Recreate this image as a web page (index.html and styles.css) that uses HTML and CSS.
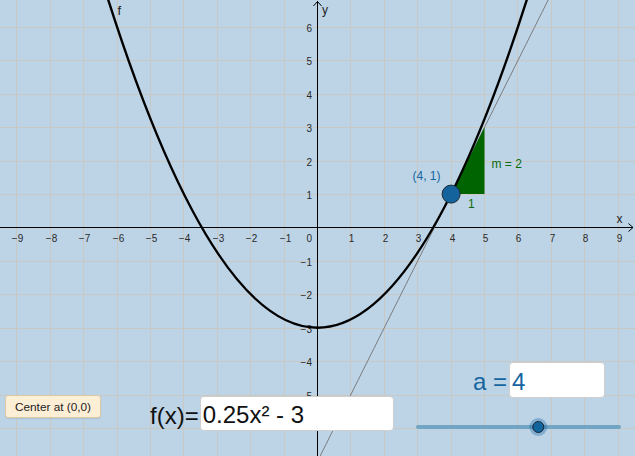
FILE: index.html
```html
<!DOCTYPE html>
<html>
<head>
<meta charset="utf-8">
<link rel="stylesheet" href="styles.css">
</head>
<body>
<div class="stage">
  <svg class="graph" width="635" height="456" viewBox="0 0 635 456" xmlns="http://www.w3.org/2000/svg">
    <rect width="635" height="456" fill="#bdd4e7"/>
    <g class="grid" stroke="#cac8c4" stroke-width="1">
      <line x1="16.5" y1="0" x2="16.5" y2="456"/>
      <line x1="50.5" y1="0" x2="50.5" y2="456"/>
      <line x1="83.5" y1="0" x2="83.5" y2="456"/>
      <line x1="117.5" y1="0" x2="117.5" y2="456"/>
      <line x1="150.5" y1="0" x2="150.5" y2="456"/>
      <line x1="183.5" y1="0" x2="183.5" y2="456"/>
      <line x1="217.5" y1="0" x2="217.5" y2="456"/>
      <line x1="250.5" y1="0" x2="250.5" y2="456"/>
      <line x1="284.5" y1="0" x2="284.5" y2="456"/>
      <line x1="350.5" y1="0" x2="350.5" y2="456"/>
      <line x1="384.5" y1="0" x2="384.5" y2="456"/>
      <line x1="417.5" y1="0" x2="417.5" y2="456"/>
      <line x1="451.5" y1="0" x2="451.5" y2="456"/>
      <line x1="484.5" y1="0" x2="484.5" y2="456"/>
      <line x1="517.5" y1="0" x2="517.5" y2="456"/>
      <line x1="551.5" y1="0" x2="551.5" y2="456"/>
      <line x1="584.5" y1="0" x2="584.5" y2="456"/>
      <line x1="618.5" y1="0" x2="618.5" y2="456"/>
      <line x1="0" y1="27.5" x2="635" y2="27.5"/>
      <line x1="0" y1="60.5" x2="635" y2="60.5"/>
      <line x1="0" y1="94.5" x2="635" y2="94.5"/>
      <line x1="0" y1="127.5" x2="635" y2="127.5"/>
      <line x1="0" y1="161.5" x2="635" y2="161.5"/>
      <line x1="0" y1="194.5" x2="635" y2="194.5"/>
      <line x1="0" y1="261.5" x2="635" y2="261.5"/>
      <line x1="0" y1="294.5" x2="635" y2="294.5"/>
      <line x1="0" y1="328.5" x2="635" y2="328.5"/>
      <line x1="0" y1="361.5" x2="635" y2="361.5"/>
      <line x1="0" y1="395.5" x2="635" y2="395.5"/>
      <line x1="0" y1="428.5" x2="635" y2="428.5"/>
    </g>
    <g class="axes" stroke="#000" stroke-width="1" fill="none">
      <line x1="0" y1="227.5" x2="633" y2="227.5"/>
      <line x1="317.5" y1="1" x2="317.5" y2="456"/>
      <polyline points="313.5,6 317.5,1.5 321.5,6"/>
      <polyline points="628.5,223.5 633,227.5 628.5,231.5"/>
    </g>
    <g class="ticks" font-family="'Liberation Sans', Arial, sans-serif" font-size="10" fill="#2a2a2a" text-anchor="middle">
      <text x="17.5" y="241.5">−9</text>
      <text x="51.5" y="241.5">−8</text>
      <text x="84.5" y="241.5">−7</text>
      <text x="118.5" y="241.5">−6</text>
      <text x="151.5" y="241.5">−5</text>
      <text x="184.5" y="241.5">−4</text>
      <text x="218.5" y="241.5">−3</text>
      <text x="251.5" y="241.5">−2</text>
      <text x="285.5" y="241.5">−1</text>
      <text x="351.5" y="241.5">1</text>
      <text x="385.5" y="241.5">2</text>
      <text x="418.5" y="241.5">3</text>
      <text x="452.5" y="241.5">4</text>
      <text x="485.5" y="241.5">5</text>
      <text x="518.5" y="241.5">6</text>
      <text x="552.5" y="241.5">7</text>
      <text x="585.5" y="241.5">8</text>
      <text x="619.5" y="241.5">9</text>
    </g>
    <g class="ticks" font-family="'Liberation Sans', Arial, sans-serif" font-size="10" fill="#2a2a2a" text-anchor="end">
      <text x="312" y="241.5">0</text>
      <text x="312" y="31.5">6</text>
      <text x="312" y="64.5">5</text>
      <text x="312" y="98.5">4</text>
      <text x="312" y="131.5">3</text>
      <text x="312" y="165.5">2</text>
      <text x="312" y="198.5">1</text>
      <text x="312" y="265.5">−1</text>
      <text x="312" y="298.5">−2</text>
      <text x="312" y="332.5">−3</text>
      <text x="312" y="365.5">−4</text>
      <text x="312" y="399.5">−5</text>
    </g>
    <g font-family="'Liberation Sans', Arial, sans-serif" fill="#222">
      <text x="616.5" y="223" font-size="12">x</text>
      <text x="322" y="14" font-size="12">y</text>
      <text x="117.5" y="15" font-size="13">f</text>
    </g>
    <line class="tangent" x1="317.5" y1="461.3" x2="558" y2="-19.7" stroke="#7a7d80" stroke-width="1"/>
    <polygon points="451.1,194.1 484.5,194.1 484.5,127.3" fill="#006400"/>
    <path d="M97.06,-36.03 Q317.5,691.43 537.94,-36.03" fill="none" stroke="#000" stroke-width="2.4"/>
    <circle cx="451.1" cy="194.1" r="9" fill="#14639d" stroke="#1c2b38" stroke-width="1"/>
    <g font-family="'Liberation Sans', Arial, sans-serif" font-size="12">
      <text x="412.5" y="179.5" fill="#1565a0">(4, 1)</text>
      <text x="491.5" y="168" fill="#0b6a0b">m = 2</text>
      <text x="468" y="207.5" fill="#0b6a0b">1</text>
    </g>
    <g class="slider">
      <line x1="418" y1="427" x2="619" y2="427" stroke="#72a4c4" stroke-width="4" stroke-linecap="round"/>
      <circle cx="538.3" cy="427" r="9" fill="#1565a0" fill-opacity="0.35"/>
      <circle cx="538.3" cy="427" r="5.5" fill="#11649c" stroke="#1c2633" stroke-width="1"/>
    </g>
  </svg>

  <button class="btn-center">Center at (0,0)</button>

  <div class="field field-f">
    <span class="field-label">f(x)=</span>
    <div class="field-box box-f">0.25x² - 3</div>
  </div>

  <div class="field field-a">
    <span class="field-label label-a">a =</span>
    <div class="field-box box-a">4</div>
  </div>
</div>
</body>
</html>
```

FILE: styles.css
```css
html, body {
  margin: 0;
  padding: 0;
}
body {
  font-family: "Liberation Sans", Arial, sans-serif;
  background: #bdd4e7;
}
.stage {
  position: relative;
  width: 635px;
  height: 456px;
  overflow: hidden;
}
.graph {
  display: block;
}
.btn-center {
  position: absolute;
  left: 5px;
  top: 395px;
  width: 96px;
  height: 23px;
  box-sizing: border-box;
  margin: 0;
  padding: 0;
  background: #fdeed6;
  border: 1px solid #dcc9a6;
  border-radius: 3px;
  font-family: "Liberation Sans", Arial, sans-serif;
  font-size: 11.8px;
  color: #222;
  box-shadow: 0 1px 1px rgba(0,0,0,0.08);
}
.field {
  position: absolute;
  display: flex;
  align-items: flex-start;
}
.field-label {
  font-size: 24px;
  line-height: 36px;
  white-space: pre;
}
.field-box {
  box-sizing: border-box;
  background: #fff;
  border: 1px solid #cfcfcf;
  border-radius: 4px;
  font-size: 24px;
  line-height: 33px;
  padding-left: 2px;
  white-space: pre;
}
.field-f {
  left: 150px;
  top: 395px;
}
.field-f .field-label {
  color: #111;
  margin-top: 3px;
}
.box-f {
  margin-left: 1px;
  margin-top: 1px;
  width: 194px;
  height: 35px;
  padding-top: 1px;
  color: #111;
}
.field-a {
  left: 473px;
  top: 362px;
}
.label-a {
  color: #1565a0;
  margin-top: 2px;
  margin-right: 2px;
}
.box-a {
  width: 96px;
  height: 36px;
  padding-top: 2px;
  color: #1565a0;
}
```
